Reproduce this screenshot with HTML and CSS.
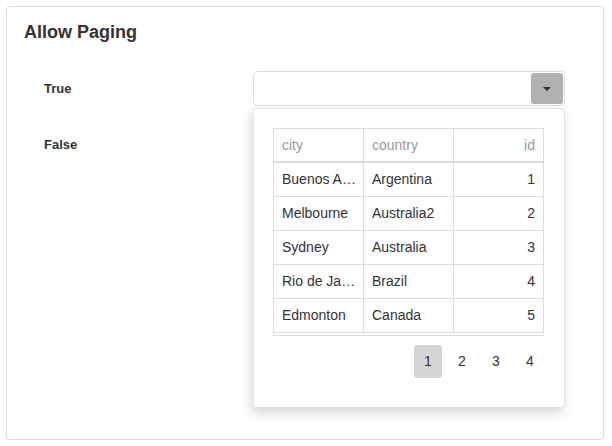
FILE: index.html
```html
<!DOCTYPE html>
<html>
<head>
<meta charset="utf-8">
<link rel="stylesheet" href="styles.css">
</head>
<body>
<div class="card">
  <h2 class="title">Allow Paging</h2>
  <div class="rows">
    <div class="row">
      <div class="label">True</div>
      <div class="dropdown">
        <div class="btn"><span class="caret"></span></div>
        <div class="popup">
          <div class="grid">
            <div class="hd">city</div><div class="hd">country</div><div class="hd num">id</div>
            <div class="cell">Buenos Aires</div><div class="cell">Argentina</div><div class="cell num">1</div>
            <div class="cell">Melbourne</div><div class="cell">Australia2</div><div class="cell num">2</div>
            <div class="cell">Sydney</div><div class="cell">Australia</div><div class="cell num">3</div>
            <div class="cell">Rio de Janeiro</div><div class="cell">Brazil</div><div class="cell num">4</div>
            <div class="cell">Edmonton</div><div class="cell">Canada</div><div class="cell num">5</div>
          </div>
          <div class="grid-foot"></div>
          <div class="pager">
            <span class="page active">1</span>
            <span class="page">2</span>
            <span class="page">3</span>
            <span class="page">4</span>
          </div>
        </div>
      </div>
    </div>
    <div class="row">
      <div class="label">False</div>
      <div class="dropdown">
        <div class="btn"><span class="caret"></span></div>
      </div>
    </div>
  </div>
</div>
</body>
</html>
```
FILE: styles.css
```css
* { box-sizing: border-box; }
body {
  margin: 6px;
  font-family: "Liberation Sans", Arial, sans-serif;
  color: #333;
  background: #fff;
}
.card {
  width: 598px;
  height: 434px;
  border: 1px solid #dcdcdc;
  border-radius: 4px;
  padding: 15px 17px 13px;
}
.title {
  margin: 0;
  font-size: 18px;
  font-weight: bold;
  line-height: 20px;
  color: #333;
}
.rows {
  margin-top: 29px;
  padding-left: 20px;
  display: flex;
  flex-direction: column;
  gap: 21px;
}
.row {
  display: flex;
  align-items: center;
}
.label {
  width: 209px;
  font-size: 13px;
  font-weight: bold;
  color: #333;
}
.dropdown {
  position: relative;
  width: 312px;
  height: 35px;
  border: 1px solid #dcdcdc;
  border-radius: 4px;
  background: #fff;
}
.btn {
  position: absolute;
  right: 1px;
  top: 1px;
  bottom: 1px;
  width: 32px;
  background: #b1b1b1;
  border-radius: 3px;
  display: flex;
  align-items: center;
  justify-content: center;
}
.caret {
  width: 0;
  height: 0;
  border-left: 4px solid transparent;
  border-right: 4px solid transparent;
  border-top: 4px solid #333;
}
.popup {
  position: absolute;
  z-index: 2;
  left: -1px;
  top: 36px;
  width: 312px;
  height: 300px;
  background: #fff;
  border: 1px solid #e4e4e4;
  border-radius: 4px;
  box-shadow: -2px 5px 12px rgba(0,0,0,0.16);
  padding: 19px 20px 0 19px;
}
.grid {
  display: grid;
  grid-template-columns: 90px 90px 90px;
  width: 271px;
  border-left: 1px solid #dcdcdc;
  border-top: 1px solid #dcdcdc;
}
.hd, .cell {
  height: 34px;
  line-height: 33px;
  font-size: 14px;
  padding: 0 4px 0 8px;
  border-right: 1px solid #dcdcdc;
  border-bottom: 1px solid #dcdcdc;
  white-space: nowrap;
  overflow: hidden;
  text-overflow: ellipsis;
}
.hd {
  color: #999;
  border-bottom-width: 2px;
  line-height: 32px;
}
.cell { color: #333; }
.num { text-align: right; padding-right: 8px; }
.grid-foot {
  width: 271px;
  margin-top: 2px;
  border-top: 1px solid #dcdcdc;
}
.pager {
  width: 271px;
  margin-top: 9px;
  display: flex;
  justify-content: flex-end;
  gap: 6px;
}
.page {
  width: 28px;
  height: 33px;
  line-height: 33px;
  text-align: center;
  font-size: 14px;
  color: #333;
  border-radius: 3px;
}
.page.active { background: #d4d4d4; }
```
